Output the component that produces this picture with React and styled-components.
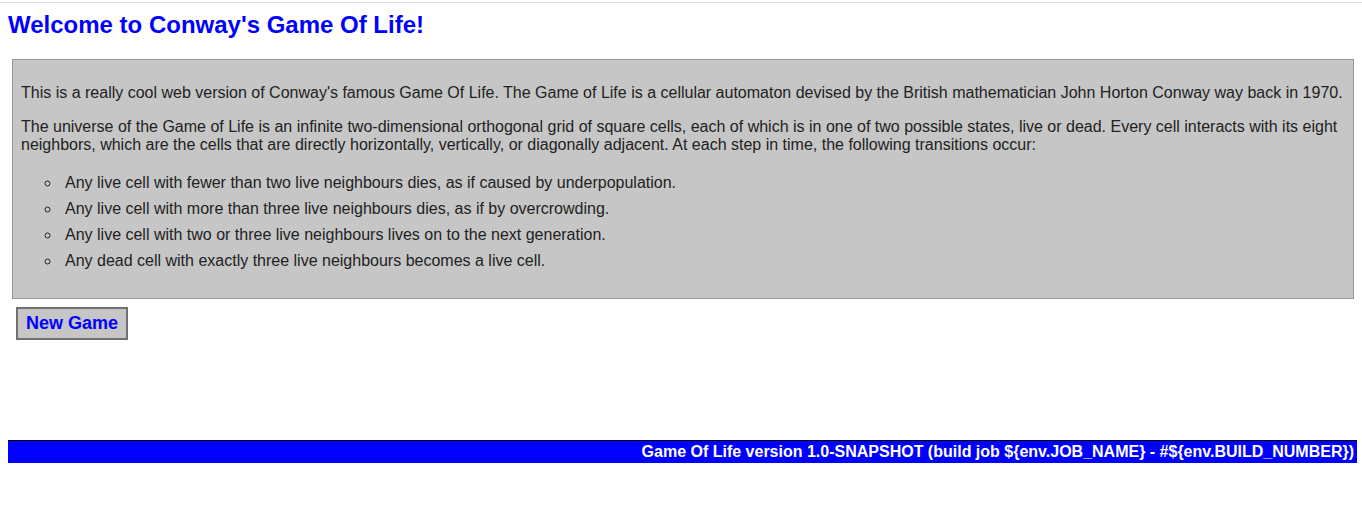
import styled, { createGlobalStyle } from "styled-components"

const GlobalStyle = createGlobalStyle`
  body {
    margin: 0;
    background: #fff;
    font-family: "Liberation Sans", Arial, sans-serif;
  }
`

const rules = [
  "Any live cell with fewer than two live neighbours dies, as if caused by underpopulation.",
  "Any live cell with more than three live neighbours dies, as if by overcrowding.",
  "Any live cell with two or three live neighbours lives on to the next generation.",
  "Any dead cell with exactly three live neighbours becomes a live cell.",
]

export default function App() {
  return (
    <>
      <GlobalStyle />
      <TopRule />
      <Page>
        <Title>Welcome to Conway's Game Of Life!</Title>
        <Intro>
          <Para>
            This is a really cool web version of Conway's famous Game Of Life. The Game of Life is a
            cellular automaton devised by the British mathematician John Horton Conway way back in
            1970.
          </Para>
          <Para>
            The universe of the Game of Life is an infinite two-dimensional orthogonal grid of square
            cells, each of which is in one of two possible states, live or dead. Every cell interacts
            with its eight neighbors, which are the cells that are directly horizontally, vertically,
            or diagonally adjacent. At each step in time, the following transitions occur:
          </Para>
          <RuleList>
            {rules.map((rule) => (
              <Rule key={rule}>{rule}</Rule>
            ))}
          </RuleList>
        </Intro>
        <Actions>
          <GameButton>New Game</GameButton>
        </Actions>
        <Footer>
          Game Of Life version 1.0-SNAPSHOT (build job ${"{env.JOB_NAME}"} - #${"{env.BUILD_NUMBER}"})
        </Footer>
      </Page>
    </>
  )
}

const TopRule = styled.div`
  margin-top: 2px;
  height: 1px;
  background: #dedede;
`

const Page = styled.div`
  padding: 0 5px 0 8px;
  display: flex;
  flex-direction: column;
`

const Title = styled.h2`
  margin: 8px 0 0 0;
  color: blue;
  font-size: 24px;
  line-height: 28px;
  font-weight: bold;
`

const Intro = styled.div`
  margin: 20px 0 0 4px;
  padding: 8px;
  box-sizing: border-box;
  width: 1342px;
  background: #c6c6c6;
  border: 1px solid #979797;
  color: #222;
  font-size: 16px;
  line-height: 18px;
`

const Para = styled.p`
  margin: 16px 0;
`

const RuleList = styled.ul`
  margin: 16px 0;
  padding-left: 40px;
  list-style: circle;
`

const Rule = styled.li`
  padding: 4px 0 4px 4px;
`

const Actions = styled.div`
  display: flex;
  padding: 8px 0 0 8px;
  height: 133px;
  align-items: flex-start;
`

const GameButton = styled.button`
  height: 33px;
  width: 112px;
  padding: 0;
  background: #c6c6c6;
  border: 2px solid #707070;
  color: blue;
  font-family: "Liberation Sans", Arial, sans-serif;
  font-size: 18px;
  font-weight: bold;
`

const Footer = styled.div`
  height: 22px;
  line-height: 22px;
  border-top: 1px solid #000;
  background: blue;
  color: #fff;
  font-size: 16px;
  font-weight: bold;
  text-align: right;
  padding-right: 3px;
`
